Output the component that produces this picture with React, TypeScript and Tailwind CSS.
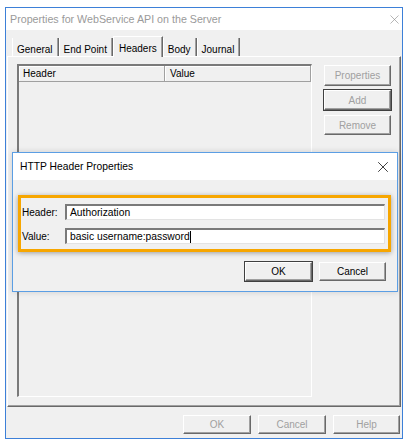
import { X } from "lucide-react";

const ui = { fontFamily: '"Liberation Sans", Arial, sans-serif' };

function Tab({ label, active }: { label: string; active?: boolean }) {
  if (active) {
    return (
      <div className="relative z-10 -mb-[1px] h-[21px] px-[5px] pt-[4px] bg-[#f0f0f0] border-l border-t border-white border-r border-r-[#696969] shadow-[inset_-1px_0_0_#a0a0a0]">
        {label}
      </div>
    );
  }
  return (
    <div className="mt-[2px] h-[18px] px-[5px] pt-[4px] border-r border-[#696969] shadow-[inset_-1px_0_0_#a0a0a0,inset_1px_0_0_#ffffff]">
      {label}
    </div>
  );
}

function Btn({
  label,
  disabled,
  isDefault,
  className = "",
}: {
  label: string;
  disabled?: boolean;
  isDefault?: boolean;
  className?: string;
}) {
  return (
    <div
      className={
        "flex items-center justify-center bg-[#f0f0f0] " +
        (isDefault ? "border border-[#404040] " : "border border-[#f0f0f0] ") +
        className
      }
    >
      <div
        className={
          "w-full h-full flex items-center justify-center border-l border-t border-white border-r border-b border-r-[#696969] border-b-[#696969] shadow-[inset_-1px_-1px_0_#a0a0a0] " +
          (disabled ? "text-[#a0a0a0]" : "text-black")
        }
      >
        {label}
      </div>
    </div>
  );
}

function Field({ value, caret }: { value: string; caret?: boolean }) {
  return (
    <div className="flex-1 h-[16px] bg-white border-l-2 border-t-2 border-[#7a7a7a] border-r border-b border-r-[#e3e3e3] border-b-[#e3e3e3] flex items-center pl-[3px] text-[10.3px] text-black">
      <span>{value}</span>
      {caret && <span className="inline-block w-[1px] h-[12px] bg-black" />}
    </div>
  );
}

export default function App() {
  return (
    <div className="relative w-[410px] h-[446px] bg-white pl-[5px] pt-[7px] text-[10px]" style={ui}>
      {/* main properties window */}
      <div className="w-[398px] h-[432px] border border-[#3d80d8] flex flex-col bg-[#f0f0f0]">
        <div className="h-[22px] bg-white flex items-center justify-between pl-[4px] text-[#9a9a9a] text-[10.7px]">
          <span>Properties for WebService API on the Server</span>
          <X size={15} strokeWidth={1} className="text-[#8a8a8a]" />
        </div>

        <div className="flex-1 flex flex-col">
          <div className="flex items-end pt-[6px] pl-[6px] h-[26px] text-black">
            <Tab label="General" />
            <Tab label="End Point" />
            <Tab label="Headers" active />
            <Tab label="Body" />
            <Tab label="Journal" />
          </div>

          <div className="mx-[1px] h-[351px] border-l border-t border-white border-r border-b border-r-[#696969] border-b-[#696969] shadow-[inset_-1px_-1px_0_#a0a0a0] flex pl-[9px] pt-[7px] pr-[7px] pb-[9px] gap-[11px]">
            <div className="w-[295px] border-t-2 border-l-2 border-[#7a7a7a] border-r border-b border-r-white border-b-white flex flex-col">
              <div className="flex h-[16px] text-black">
                <div className="w-[146px] pl-[4px] flex items-center border-r border-b border-[#a0a0a0] shadow-[inset_1px_1px_0_#ffffff]">
                  Header
                </div>
                <div className="flex-1 pl-[5px] flex items-center border-r border-b border-[#a0a0a0] shadow-[inset_1px_1px_0_#ffffff]">
                  Value
                </div>
              </div>
              <div className="flex-1 bg-[#f0f0f0]" />
            </div>
            <div className="flex flex-col gap-[2px] w-[69px]">
              <Btn label="Properties" disabled className="h-[23px]" />
              <Btn label="Add" disabled isDefault className="h-[22px]" />
              <Btn label="Remove" disabled className="h-[22px] mt-[1px]" />
            </div>
          </div>

          <div className="flex justify-end gap-[5px] pt-[7px] pr-[1px]">
            <Btn label="OK" disabled className="w-[70px] h-[21px]" />
            <Btn label="Cancel" disabled className="w-[70px] h-[21px]" />
            <Btn label="Help" disabled className="w-[69px] h-[21px]" />
          </div>
        </div>
      </div>

      {/* HTTP header dialog over the window */}
      <div className="absolute left-[12px] top-[152px] w-[386px] h-[140px] border border-[#5b9ee4] bg-[#f0f0f0] flex flex-col shadow-[0_0_6px_rgba(0,0,0,0.15)]">
        <div className="h-[27px] bg-white flex items-center justify-between pl-[7px] pr-[5px] text-[10.3px] text-black">
          <span>HTTP Header Properties</span>
          <X size={18} strokeWidth={1} className="text-black" />
        </div>

        <div className="ml-[5px] mt-[15px] w-[373px] h-[57px] border-[3px] border-[#f7a600] shadow-[0_1px_5px_rgba(0,0,0,0.35)] flex flex-col gap-[8px] pt-[6px] pl-[1px] pr-[3px]">
          <div className="flex items-center">
            <span className="w-[43px] text-black">Header:</span>
            <Field value="Authorization" />
          </div>
          <div className="flex items-center">
            <span className="w-[43px] text-black">Value:</span>
            <Field value="basic username:password" caret />
          </div>
        </div>

        <div className="flex justify-end gap-[5px] mt-[9px] pr-[10px]">
          <Btn label="OK" isDefault className="w-[69px] h-[21px]" />
          <Btn label="Cancel" className="w-[69px] h-[21px]" />
        </div>
      </div>
    </div>
  );
}
